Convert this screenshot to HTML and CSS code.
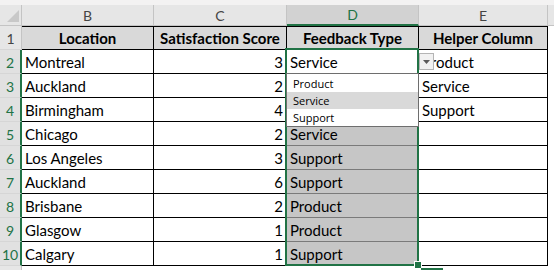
FILE: index.html
```html
<!DOCTYPE html>
<html>
<head>
<meta charset="utf-8">
<link rel="stylesheet" href="styles.css">
</head>
<body>
<div class="sheet">
  <div class="topstrip"></div>
  <div class="grid">
    <div class="corner"><svg width="12" height="12" viewBox="0 0 12 12"><polygon points="12,0 12,12 0,12" fill="#c8c8c8"/></svg></div>
    <div class="ch">B</div>
    <div class="ch">C</div>
    <div class="ch ch-sel">D</div>
    <div class="ch">E</div>
    <div class="ch ch-end"></div>

    <div class="rh">1</div>
    <div class="c hd">Location</div>
    <div class="c hd">Satisfaction Score</div>
    <div class="c hd">Feedback Type</div>
    <div class="c hd">Helper Column</div>
    <div class="blank"></div>

    <div class="rh rh-sel">2</div>
    <div class="c">Montreal</div>
    <div class="c num">3</div>
    <div class="c">Service</div>
    <div class="c">Product</div>
    <div class="blank"></div>

    <div class="rh rh-sel">3</div>
    <div class="c">Auckland</div>
    <div class="c num">2</div>
    <div class="c"></div>
    <div class="c">Service</div>
    <div class="blank"></div>

    <div class="rh rh-sel">4</div>
    <div class="c">Birmingham</div>
    <div class="c num">4</div>
    <div class="c"></div>
    <div class="c">Support</div>
    <div class="blank"></div>

    <div class="rh rh-sel">5</div>
    <div class="c">Chicago</div>
    <div class="c num">2</div>
    <div class="c shade">Service</div>
    <div class="c"></div>
    <div class="blank"></div>

    <div class="rh rh-sel">6</div>
    <div class="c">Los Angeles</div>
    <div class="c num">3</div>
    <div class="c shade">Support</div>
    <div class="c"></div>
    <div class="blank"></div>

    <div class="rh rh-sel">7</div>
    <div class="c">Auckland</div>
    <div class="c num">6</div>
    <div class="c shade">Support</div>
    <div class="c"></div>
    <div class="blank"></div>

    <div class="rh rh-sel">8</div>
    <div class="c">Brisbane</div>
    <div class="c num">2</div>
    <div class="c shade">Product</div>
    <div class="c"></div>
    <div class="blank"></div>

    <div class="rh rh-sel">9</div>
    <div class="c">Glasgow</div>
    <div class="c num">1</div>
    <div class="c shade">Product</div>
    <div class="c"></div>
    <div class="blank"></div>

    <div class="rh rh-sel">10</div>
    <div class="c">Calgary</div>
    <div class="c num">1</div>
    <div class="c shade">Support</div>
    <div class="c"></div>
    <div class="blank"></div>

    <div class="rh rh-tail"></div>
    <div class="tail"></div>
    <div class="tail"></div>
    <div class="tail"></div>
    <div class="tail"></div>
    <div class="tail"></div>
  </div>

  <div class="selection"></div>
  <div class="fill-handle"></div>
  <div class="fill-mark"></div>
  <div class="dd-button"><svg width="7" height="4" viewBox="0 0 7 4"><polygon points="0,0 7,0 3.5,4" fill="#5a5a5a"/></svg></div>
  <div class="dd-list">
    <div class="dd-item">Product</div>
    <div class="dd-item dd-hover">Service</div>
    <div class="dd-item">Support</div>
  </div>
</div>
</body>
</html>
```

FILE: styles.css
```css
* { box-sizing: border-box; }
html, body { margin: 0; padding: 0; background: #ffffff; }
body { width: 554px; height: 270px; overflow: hidden; }

.sheet {
  position: relative;
  width: 554px;
  height: 270px;
  font-family: Lato, "Liberation Sans", sans-serif;
  font-size: 15px;
  color: #000;
}

.topstrip { height: 5px; background: #f3f2f2; }

.grid {
  display: grid;
  grid-template-columns: 22px 132px 133px 132px 129px 6px;
  grid-template-rows: 21px repeat(10, 24px) 4px;
}

.corner {
  background: #e6e6e6;
  border-right: 1px solid #c4c4c4;
  border-bottom: 1px solid #c4c4c4;
  display: flex;
  align-items: flex-end;
  justify-content: flex-end;
  padding: 0 2px 3px 0;
}

.ch {
  background: #e6e6e6;
  border-right: 1px solid #c4c4c4;
  border-bottom: 1px solid #c4c4c4;
  color: #444;
  font-size: 14px;
  display: flex;
  align-items: center;
  justify-content: center;
}
.ch-sel {
  background: #d2d2d2;
  color: #217346;
  border-bottom: 2px solid #217346;
}
.ch-end { border-right: none; }

.rh {
  background: #e6e6e6;
  border-right: 1px solid #c4c4c4;
  border-bottom: 1px solid #d6d6d6;
  color: #444;
  font-size: 14px;
  display: flex;
  align-items: flex-end;
  justify-content: center;
  padding-bottom: 2px;
}
.rh-sel {
  background: #e1e1e1;
  color: #217346;
  border-right: 2px solid #217346;
}
.rh-tail { border-bottom: none; }

.c {
  border-right: 1px solid #000;
  border-bottom: 1px solid #000;
  padding: 0 3px 2px 3px;
  display: flex;
  align-items: flex-end;
  white-space: nowrap;
  overflow: hidden;
  line-height: 18px;
}
.hd {
  background: #d9d9d9;
  font-weight: 700;
  justify-content: center;
  border-top: 1px solid #000;
}
.num { justify-content: flex-end; }
.shade { background: #c6c6c6; border-bottom-color: #7a7a7a; }

.blank { background: #fff; }
.tail { background: #fff; }

.selection {
  position: absolute;
  left: 285px;
  top: 48px;
  width: 134px;
  height: 218px;
  border: 2px solid #217346;
  pointer-events: none;
}
.fill-handle {
  position: absolute;
  left: 414px;
  top: 261px;
  width: 8px;
  height: 8px;
  background: #217346;
  border: 1px solid #fff;
}
.fill-mark {
  position: absolute;
  left: 421px;
  top: 268px;
  width: 22px;
  height: 2px;
  background: #217346;
}

.dd-button {
  position: absolute;
  left: 419px;
  top: 53px;
  width: 15px;
  height: 17px;
  background: #f1f1f1;
  border: 1px solid #b4b4b4;
  display: flex;
  align-items: center;
  justify-content: center;
}

.dd-list {
  position: absolute;
  left: 286px;
  top: 73px;
  width: 133px;
  height: 54px;
  background: #fff;
  border: 1px solid #6e6e6e;
  padding-top: 1px;
  font-family: "Open Sans", "DejaVu Sans", sans-serif;
  font-size: 11px;
  color: #000;
}
.dd-item {
  height: 17px;
  line-height: 17px;
  padding-left: 6px;
}
.dd-hover { background: #d9d9d9; }
```
